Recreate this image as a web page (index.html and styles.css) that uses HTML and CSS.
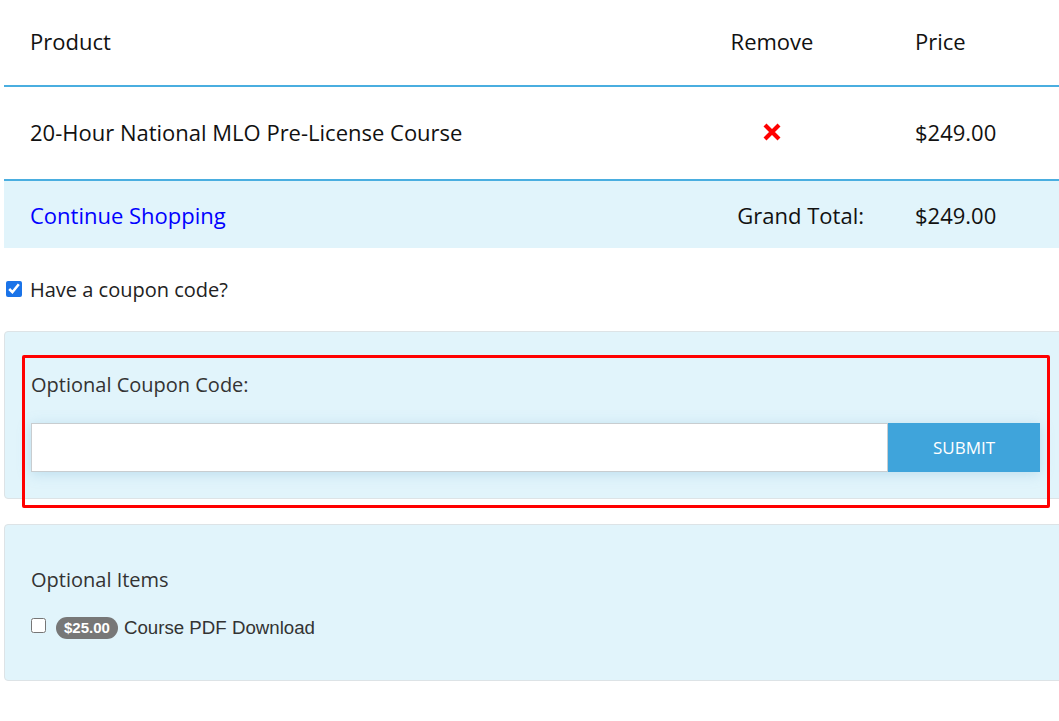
FILE: index.html
```html
<!DOCTYPE html>
<html lang="en">
<head>
<meta charset="utf-8">
<title>Cart</title>
<link rel="stylesheet" href="styles.css">
</head>
<body>
<div class="page">
  <div class="cart">
    <div class="row head">
      <div class="cell c-prod">Product</div>
      <div class="cell c-rem"><span class="rem-box">Remove</span></div>
      <div class="cell c-price">Price</div>
    </div>
    <div class="row item">
      <div class="cell c-prod">20-Hour National MLO Pre-License Course</div>
      <div class="cell c-rem"><span class="rem-box"><svg class="x-icon" viewBox="0 0 20 20" width="20" height="20"><path d="M3 3 L17 17 M17 3 L3 17" stroke="#f00" stroke-width="4.2" stroke-linecap="butt"/></svg></span></div>
      <div class="cell c-price">$249.00</div>
    </div>
    <div class="row total">
      <div class="cell c-prod"><a class="continue" href="#">Continue Shopping</a></div>
      <div class="cell c-gt">Grand Total:</div>
      <div class="cell c-price">$249.00</div>
    </div>
  </div>

  <label class="coupon-toggle"><input type="checkbox" checked> Have a coupon code?</label>

  <div class="panel coupon">
    <div class="panel-label">Optional Coupon Code:</div>
    <div class="coupon-form">
      <input class="coupon-input" type="text">
      <button class="submit" type="button">SUBMIT</button>
    </div>
    <div class="highlight"></div>
  </div>

  <div class="panel optional">
    <div class="panel-label">Optional Items</div>
    <label class="opt-item"><input type="checkbox"><span class="badge">$25.00</span> Course PDF Download</label>
  </div>
</div>
</body>
</html>
```

FILE: styles.css
```css
html, body {
  margin: 0;
  padding: 0;
  background: #fff;
  overflow: hidden;
}
body {
  font-family: "Open Sans", "Noto Sans", sans-serif;
  color: #111;
}
.page {
  margin-left: 4px;
  width: 1063px;
}
.cart {
  display: flex;
  flex-direction: column;
}
.row {
  display: grid;
  grid-template-columns: 701px 185px 1fr;
  align-items: center;
  font-size: 22px;
}
.head {
  border-bottom: 2px solid #4aaee0;
  padding-bottom: 3px;
  box-sizing: border-box;
  height: 87px;
}
.item {
  height: 94px;
  box-sizing: border-box;
  padding-bottom: 3px;
  border-bottom: 2px solid #4aaee0;
}
.total {
  height: 67px;
  background: #e1f4fb;
}
.cell {
  padding: 0 26px;
  white-space: nowrap;
}
.c-rem {
  padding-left: 25px;
}
.rem-box {
  display: inline-flex;
  justify-content: center;
  width: 84px;
}
.x-icon {
  display: block;
  margin-top: 6px;
}
.c-price {
  padding-left: 25px;
}
.c-gt {
  text-align: right;
}
.continue {
  color: #0000ff;
  text-decoration: none;
}
.coupon-toggle {
  display: flex;
  align-items: center;
  gap: 8px;
  font-size: 20px;
  color: #222;
  margin-top: 27px;
  margin-left: 2px;
  height: 28px;
}
.coupon-toggle input {
  width: 16px;
  height: 16px;
  margin: 0;
  accent-color: #1a73e8;
}
.panel {
  position: relative;
  background: #e1f4fb;
  border: 1px solid #dde3e6;
  border-radius: 4px;
  padding: 0 26px;
}
.coupon {
  margin-top: 28px;
  height: 168px;
  padding-top: 40px;
  box-sizing: border-box;
}
.panel-label {
  font-size: 20px;
  color: #333;
  line-height: 26px;
}
.coupon-form {
  display: flex;
  margin-top: 25px;
  box-shadow: 0 2px 12px rgba(120, 180, 215, 0.35);
}
.coupon-input {
  flex: 1;
  height: 49px;
  box-sizing: border-box;
  border: 1px solid #c8cdd0;
  background: #fff;
  margin: 0;
  padding: 0 10px;
  font-size: 16px;
}
.submit {
  width: 152px;
  height: 49px;
  border: 0;
  margin: 0;
  background: #3fa4db;
  color: #fff;
  font-family: "Open Sans", "Noto Sans", sans-serif;
  font-size: 17px;
}
.highlight {
  position: absolute;
  left: 17px;
  top: 23px;
  width: 1022px;
  height: 147px;
  border: 3px solid #ff0000;
  border-radius: 2px;
  pointer-events: none;
}
.optional {
  margin-top: 25px;
  height: 157px;
  box-sizing: border-box;
  padding-top: 42px;
}
.opt-item {
  display: flex;
  align-items: center;
  margin-top: 24px;
  font-family: "Liberation Sans", Arial, sans-serif;
  font-size: 18.7px;
  color: #333;
}
.opt-item input {
  width: 15px;
  height: 15px;
  margin: -6px 10px 0 0;
}
.badge {
  display: inline-block;
  background: #777;
  color: #fff;
  font-weight: bold;
  font-size: 15px;
  line-height: 22px;
  padding: 0 8px;
  border-radius: 11px;
  margin-right: 6px;
}
```
